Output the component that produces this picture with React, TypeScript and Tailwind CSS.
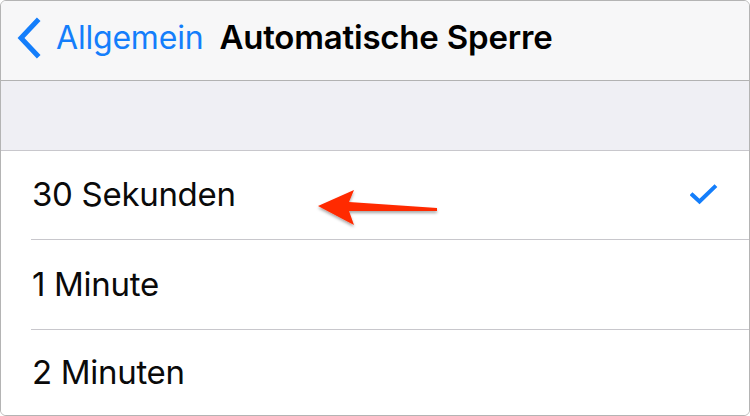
import React from "react";

const font = { fontFamily: "Inter, 'Liberation Sans', sans-serif" };

function Chevron() {
  return (
    <svg width="28" height="42" viewBox="0 0 28 42" className="shrink-0">
      <path d="M21 4 L5 21 L21 38" fill="none" stroke="#147efb" strokeWidth="5" strokeLinecap="square" />
    </svg>
  );
}

function Check() {
  return (
    <svg width="28" height="22" viewBox="0 0 28 22">
      <path d="M2.5 11 L9.5 17.5 L24.5 3" fill="none" stroke="#147efb" strokeWidth="4" strokeLinecap="square" />
    </svg>
  );
}

function RedArrow() {
  return (
    <svg width="140" height="60" viewBox="0 0 140 60" className="absolute left-[308px] top-[26px]">
      <defs>
        <filter id="arrowShadow" x="-20%" y="-40%" width="140%" height="180%">
          <feDropShadow dx="0" dy="2" stdDeviation="1.6" floodColor="#000" floodOpacity="0.35" />
        </filter>
      </defs>
      <path
        d="M9 29 L45 13 L40 25 L128 31 L128 34 L40 34 L45 48 Z"
        fill="#ff2a00"
        filter="url(#arrowShadow)"
        strokeLinejoin="round"
      />
    </svg>
  );
}

function Row({ label, checked, last }: { label: string; checked?: boolean; last?: boolean }) {
  return (
    <div className="relative flex flex-1 flex-col bg-white">
      <div className="flex flex-1 items-center pl-[31px] pr-[31px]">
        <span className="flex-1 text-[33px] text-[#0a0a0a] tracking-[-0.3px]">{label}</span>
        {checked && <Check />}
      </div>
      {!last && <div className="ml-[30px] h-px bg-[#c8c7cc]" />}
    </div>
  );
}

export default function App() {
  return (
    <div className="h-[416px] w-[750px] bg-white" style={font}>
      <div className="flex h-full w-full flex-col overflow-hidden rounded-[6px] border border-[#b4b4b4]">
        <div className="flex h-[80px] shrink-0 items-center border-b border-[#b2b2b2] bg-[#f7f7f8] pb-[6px] pl-[15px]">
          <Chevron />
          <span className="ml-[12px] text-[32px] text-[#147efb] tracking-[-0.2px]">Allgemein</span>
          <span className="ml-[16px] text-[33px] font-semibold text-black tracking-[-0.2px]">Automatische Sperre</span>
        </div>
        <div className="h-[70px] shrink-0 border-b border-[#c8c7cc] bg-[#efeff4]" />
        <div className="relative flex h-[89px] shrink-0 flex-col">
          <Row label="30 Sekunden" checked />
          <RedArrow />
        </div>
        <div className="flex h-[90px] shrink-0 flex-col">
          <Row label="1 Minute" />
        </div>
        <div className="flex flex-1 flex-col">
          <Row label="2 Minuten" last />
        </div>
      </div>
    </div>
  );
}
